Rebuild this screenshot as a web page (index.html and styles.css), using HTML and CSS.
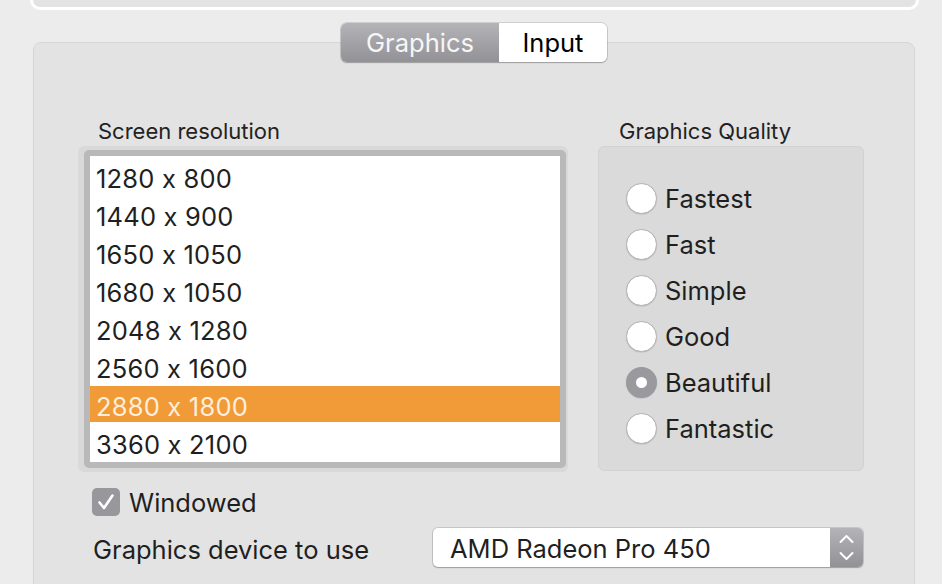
FILE: index.html
```html
<!DOCTYPE html>
<html lang="en">
<head>
<meta charset="utf-8">
<title>Player Settings</title>
<link rel="stylesheet" href="styles.css">
</head>
<body>
  <div class="top-panel"></div>

  <div class="group">
    <div class="tabs">
      <span class="seg seg-active">Graphics</span>
      <span class="seg">Input</span>
    </div>

    <div class="columns">
      <div class="res-col">
        <div class="label">Screen resolution</div>
        <div class="list-well">
          <div class="list-frame">
            <ul class="list">
              <li>1280 x 800</li>
              <li>1440 x 900</li>
              <li>1650 x 1050</li>
              <li>1680 x 1050</li>
              <li>2048 x 1280</li>
              <li>2560 x 1600</li>
              <li class="selected">2880 x 1800</li>
              <li>3360 x 2100</li>
            </ul>
          </div>
        </div>
      </div>

      <div class="quality-col">
        <div class="label label-quality">Graphics Quality</div>
        <div class="quality-box">
          <div class="radio"><span class="dot"></span>Fastest</div>
          <div class="radio"><span class="dot"></span>Fast</div>
          <div class="radio"><span class="dot"></span>Simple</div>
          <div class="radio"><span class="dot"></span>Good</div>
          <div class="radio"><span class="dot dot-on"></span>Beautiful</div>
          <div class="radio"><span class="dot"></span>Fantastic</div>
        </div>
      </div>
    </div>

    <div class="windowed">
      <span class="checkbox">
        <svg width="28" height="28" viewBox="0 0 28 28"><path d="M7.5 14.5 L12 20 L20.5 7.5" fill="none" stroke="#fff" stroke-width="2.6" stroke-linecap="round" stroke-linejoin="round"/></svg>
      </span>
      <span>Windowed</span>
    </div>

    <div class="device-row">
      <span class="device-label">Graphics device to use</span>
      <div class="popup">
        <span class="popup-text">AMD Radeon Pro 450</span>
        <span class="stepper">
          <svg width="33" height="37" viewBox="0 0 33 37"><path d="M10.5 13 L16.5 7 L22.5 13" fill="none" stroke="#fff" stroke-width="2" stroke-linecap="round" stroke-linejoin="round"/><path d="M10.5 24 L16.5 30 L22.5 24" fill="none" stroke="#fff" stroke-width="2" stroke-linecap="round" stroke-linejoin="round"/></svg>
        </span>
      </div>
    </div>
  </div>
</body>
</html>
```

FILE: styles.css
```css
html, body {
  margin: 0;
  padding: 0;
}

body {
  background: #ececec;
  font-family: Inter, "Liberation Sans", Arial, sans-serif;
  font-feature-settings: "calt" 0;
  color: #1f1f1f;
  height: 584px;
  overflow: hidden;
}

/* bottom edge of the panel above */
.top-panel {
  margin: 0 23px 0 30px;
  height: 7px;
  background: #e3e3e3;
  border: 3px solid #ffffff;
  border-top: none;
  border-radius: 0 0 10px 10px;
}

/* tabbed group box */
.group {
  margin: 32px 27px 0 33px;
  height: 600px;
  background: #e3e3e3;
  border: 1px solid #d6d6d6;
  border-radius: 8px;
  padding: 0 50px 0 44px;
  box-sizing: border-box;
}

.tabs {
  display: flex;
  width: 266px;
  height: 39px;
  margin: -20px auto 0;
  border-radius: 6px;
  overflow: hidden;
  box-shadow: 0 0 0 1px rgba(0, 0, 0, 0.12), 0 1px 1.5px rgba(0, 0, 0, 0.22);
  font-size: 25.5px;
  position: relative;
  left: 3px;
}

.seg {
  display: flex;
  align-items: center;
  justify-content: center;
  background: #ffffff;
  color: #000;
  width: 108px;
}

.seg-active {
  width: 158px;
  background: linear-gradient(#b4b4b8, #929296);
  color: #f6f6f6;
}

.columns {
  display: flex;
  gap: 30px;
  margin-top: 57px;
}

.label {
  font-size: 22px;
  line-height: 24px;
  height: 24px;
  margin: 0 0 3px 20px;
  color: #222;
}

.label-quality {
  margin-left: 21px;
}

/* resolution list */
.list-well {
  width: 490px;
  height: 326px;
  box-sizing: border-box;
  padding: 4px 2px 4px 6px;
  background: #d9d9d9;
  border-radius: 6px;
}

.list-frame {
  height: 100%;
  box-sizing: border-box;
  border: 6px solid #b9b9b9;
  border-radius: 5px;
  background: #fff;
}

.list {
  list-style: none;
  margin: 0;
  padding: 2px 0 0;
  display: flex;
  flex-direction: column;
  gap: 2px;
}

.list li {
  height: 33px;
  padding-top: 3px;
  line-height: 36px;
  font-size: 25.5px;
  letter-spacing: 0.2px;
  padding-left: 6px;
  color: #1f1f1f;
}

.list li.selected {
  background: #f09a38;
  color: #fdefd9;
}

/* quality radios */
.quality-box {
  width: 266px;
  height: 325px;
  box-sizing: border-box;
  background: #dadada;
  border: 1px solid #d2d2d2;
  border-radius: 6px;
  padding: 36px 0 0 27px;
  display: flex;
  flex-direction: column;
  gap: 15px;
}

.radio {
  display: flex;
  align-items: center;
  height: 31px;
  font-size: 25.5px;
  gap: 8px;
  color: #1f1f1f;
}

.dot {
  width: 31px;
  height: 31px;
  box-sizing: border-box;
  border-radius: 50%;
  background: #fff;
  border: 1px solid #b3b3b3;
  box-shadow: 0 0.5px 1px rgba(0, 0, 0, 0.15);
  flex: none;
}

.dot-on {
  border: 10.5px solid #9a9a9e;
  background: #fff;
}

/* windowed checkbox */
.windowed {
  display: flex;
  align-items: center;
  gap: 9px;
  margin: 16px 0 0 14px;
  height: 28px;
  font-size: 25.5px;
}

.checkbox {
  width: 28px;
  height: 28px;
  border-radius: 5px;
  background: #98989c;
  display: block;
  flex: none;
}

.checkbox svg {
  display: block;
}

/* device popup */
.device-row {
  display: flex;
  align-items: center;
  margin: 12px 0 0 15px;
  font-size: 25.5px;
}

.device-label {
  padding-top: 3px;
}

.popup {
  margin-left: auto;
  margin-right: 1px;
  width: 430px;
  height: 39px;
  box-sizing: border-box;
  display: flex;
  align-items: center;
  background: #fff;
  border-radius: 5px;
  box-shadow: 0 0 0 1px rgba(0, 0, 0, 0.12), 0 1px 1.5px rgba(0, 0, 0, 0.22);
  overflow: hidden;
}

.popup-text {
  flex: 1;
  padding-left: 17px;
  padding-top: 1px;
}

.stepper {
  width: 33px;
  height: 39px;
  background: linear-gradient(#b4b4b8, #929296);
  display: flex;
  align-items: center;
  justify-content: center;
}

.stepper svg {
  display: block;
}
```
